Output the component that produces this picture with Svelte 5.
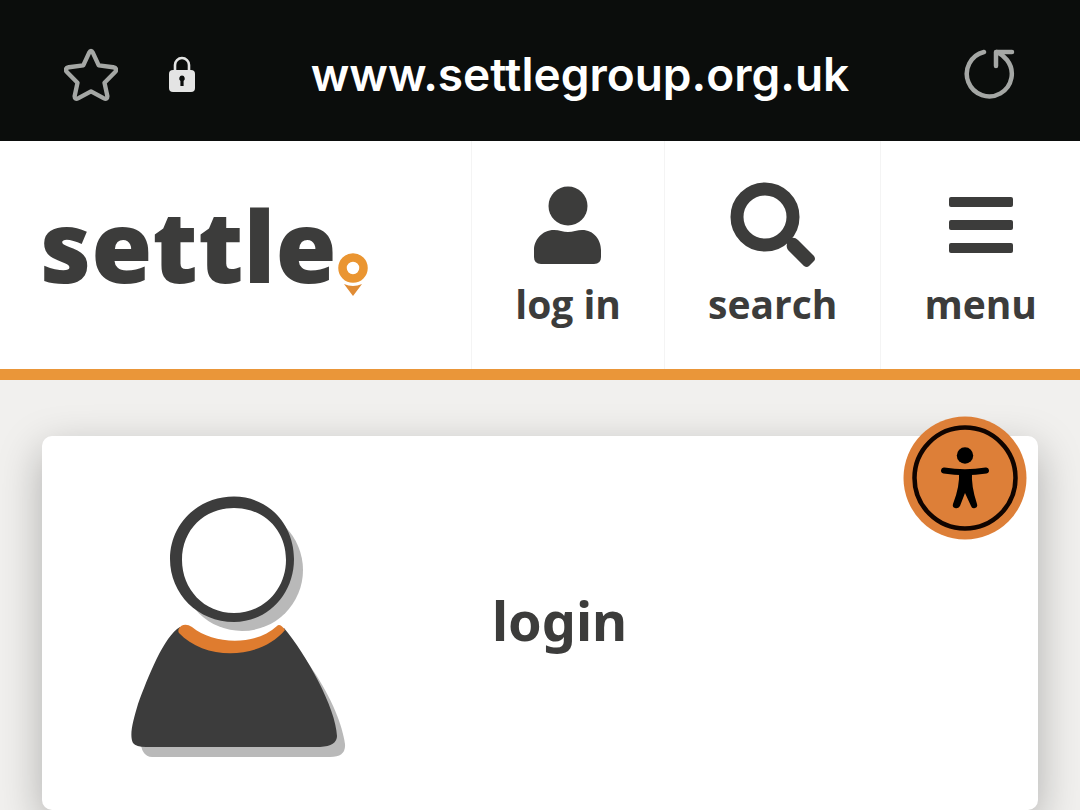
<script lang="ts">
  const address = 'www.settlegroup.org.uk'
</script>

<div class="page">
  <div class="browser-bar">
    <button aria-label="Add bookmark">
      <svg width="54" height="54" viewBox="0 0 56 56" fill="none" stroke="#a5a7a5" stroke-width="4.500" stroke-linejoin="round">
        <path d="M26 6 Q28 2 30 6 L36 19 L51 21 Q56 22 53 26 L42 37 L45 51 Q45 55 41 53 L28 46 L15 53 Q11 55 11 51 L14 37 L3 26 Q0 22 5 21 L20 19 Z" />
      </svg>
    </button>
    <svg class="lock" width="28" height="36" viewBox="0 0 28 36">
      <path d="M7 16 V9 A7 7 0 0 1 21 9 V16" fill="none" stroke="#e4e4e4" stroke-width="2.6" />
      <rect x="1" y="14" width="26" height="22" rx="4" fill="#e4e4e4" />
      <path d="M14 19.500 a3 3 0 0 1 1.600 5.400 V30 h-3.200 V24.900 A3 3 0 0 1 14 19.500 Z" fill="#0b0d0c" />
    </svg>
    <span class="address">{address}</span>
    <button aria-label="Reload">
      <svg width="52" height="52" viewBox="0 0 52 52" fill="none" stroke="#a5a7a5" stroke-width="4.500" stroke-linecap="round" stroke-linejoin="round">
        <path d="M20 4 A22.500 22.500 0 1 0 43 12 Q39 7 33 4" />
        <path d="M48 4 H32 V18" />
      </svg>
    </button>
  </div>

  <header class="site-header">
    <a class="logo" href="/" aria-label="settle home">
      <span class="logo-text">settle</span>
      <svg class="logo-pin" width="32" height="44" viewBox="0 0 32 44">
        <circle cx="16" cy="15" r="10.500" fill="none" stroke="#ea9531" stroke-width="8.500" />
        <path d="M7 31 Q16 35 25 31 L16 43 Z" fill="#e08c35" />
      </svg>
    </a>

    <nav class="site-nav">
      <a class="nav-item" href="/login">
        <svg width="70" height="88" viewBox="0 0 70 88" fill="#3c3c3b">
          <circle cx="35" cy="25" r="19.500" />
          <path d="M21 49 Q25 49 28 50 Q35 52 42 50 Q46 49 49 49 C61 49 68 59 68 69 V76 Q68 83 61 83 H8 Q1 83 1 76 V69 C1 59 9 49 21 49 Z" />
        </svg>
        <span>log in</span>
      </a>
      <a class="nav-item" href="/search">
        <svg width="86" height="88" viewBox="0 0 86 88">
          <circle cx="35" cy="36" r="28" fill="none" stroke="#3c3c3b" stroke-width="13" />
          <path d="M57 63 Q56 60 58 59 L61 57 Q65 56 68 59 L84 75 Q86 78 84 80 L79 85 Q77 87 74 85 L58 69 Q56 66 57 63 Z" fill="#3c3c3b" />
        </svg>
        <span>search</span>
      </a>
      <button class="nav-item">
        <svg width="64" height="88" viewBox="0 0 64 88" fill="#3c3c3b">
          <rect x="0" y="16" width="64" height="10" rx="2" />
          <rect x="0" y="39" width="64" height="10" rx="2" />
          <rect x="0" y="62" width="64" height="10" rx="2" />
        </svg>
        <span>menu</span>
      </button>
    </nav>
  </header>

  <main class="content">
    <a class="card" href="/account">
      <svg width="216" height="264" viewBox="0 0 216 264">
        <ellipse cx="112" cy="74" rx="61" ry="61" fill="#b9b9b9" />
        <path d="M10 242 Q11 261 22 261 L200 261 Q216 261 215 248 C211 222 196 190 170 156 L120 180 Z" fill="#b9b9b9" />
        <ellipse cx="102" cy="63" rx="57" ry="58" fill="#fff" />
        <path fill-rule="evenodd" fill="#3c3c3c" d="M104 0.500 C138 0.500 164 28 164 63 C164 98 138 126 104 126 C68 126 40 98 40 63 C40 28 68 0.500 104 0.500 Z M104 12 C74 12 52 34 52 64 C52 93 74 117 104 117 C134 117 156 93 156 64 C156 34 134 12 104 12 Z" />
        <path d="M50 131 C34 140 18 181 8 208 C3 225 -1 239 3 247 Q6 251 16 251 L190 251 Q207 250 207 240 C206 212 176 158 154 132 C130 156 76 156 50 131 Z" fill="#3c3c3c" />
        <path d="M51 130 Q56 127 62 131 C84 149 126 150 147 130 Q150 127 155 134 C130 164 75 165 49 137 Q47 134 51 130 Z" fill="#df7c2f" />
      </svg>
      <span class="card-title">login</span>
    </a>
    <button class="accessibility" aria-label="Open accessibility menu">
      <svg width="124" height="124" viewBox="0 0 124 124">
        <circle cx="62" cy="62" r="61.500" fill="#dd7f38" />
        <circle cx="62" cy="62" r="50.500" fill="none" stroke="#100400" stroke-width="4.500" />
        <circle cx="62" cy="39.500" r="8.200" />
        <path d="M41 54.500 Q62 58 83 54.500" fill="none" stroke="#000" stroke-width="6" stroke-linecap="round" />
        <path d="M56 56 H69 Q68 70 74 88 Q75 91 72 92 Q69 93 68 90 L62 77 L57 90 Q55 93 52 92 Q49 91 50 88 Q57 70 56 56 Z" />
      </svg>
    </button>
  </main>
</div>

<style>
  :global(body) {
    margin: 0;
    background: #f1f0ee;
  }

  .page {
    color: #3c3c3b;
    font-family: 'Open Sans', sans-serif;
  }

  a {
    color: inherit;
    text-decoration: none;
  }

  button {
    padding: 0;
    border: none;
    background: none;
    color: inherit;
    font: inherit;
    cursor: pointer;
  }

  svg {
    display: block;
    flex-shrink: 0;
  }

  .browser-bar {
    display: flex;
    align-items: center;
    box-sizing: border-box;
    height: 141px;
    padding: 6px 64px 0;
    background: #0b0d0c;
  }

  .lock {
    margin-left: 50px;
  }

  .address {
    flex: 1;
    color: #fff;
    font-family: Inter, sans-serif;
    font-size: 46px;
    font-weight: 600;
    line-height: 60px;
    text-align: center;
  }

  .site-header {
    display: flex;
    justify-content: space-between;
    height: 228px;
    border-bottom: 11px solid #ea9639;
    background: #fff;
  }

  .logo {
    display: flex;
    align-items: flex-end;
    align-self: flex-start;
    margin: 44px 0 0 40px;
  }

  .logo-text {
    font-family: 'Noto Sans', sans-serif;
    font-size: 99px;
    font-weight: 900;
    line-height: 120px;
  }

  .logo-pin {
    margin-bottom: 8px;
  }

  .site-nav {
    display: flex;
  }

  .nav-item {
    display: flex;
    flex-direction: column;
    align-items: center;
    padding: 40px 43px 0;
    border-left: 1px solid #f4f4f4;
    font-size: 39px;
    font-weight: 700;
    line-height: 54px;
  }

  .nav-item span {
    margin-top: 8px;
  }

  .content {
    position: relative;
    padding: 56px 42px 0;
  }

  .card {
    display: flex;
    align-items: center;
    gap: 146px;
    box-sizing: border-box;
    min-height: 374px;
    padding: 60px 88px 50px;
    border-radius: 10px;
    background: #fff;
    box-shadow: 0 14px 44px rgba(0, 0, 0, 0.28);
  }

  .card-title {
    margin-bottom: 16px;
    font-family: 'Noto Sans', sans-serif;
    font-size: 54px;
    font-weight: 700;
    line-height: 72px;
  }

  .accessibility {
    position: absolute;
    top: 36px;
    right: 53px;
    border-radius: 50%;
  }
</style>
